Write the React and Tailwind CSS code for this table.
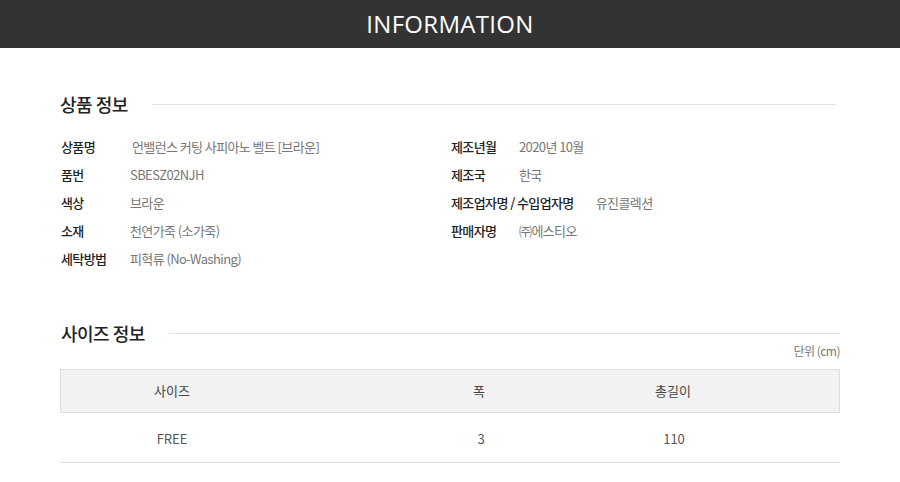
const kr = "font-['Noto_Sans_CJK_KR','Noto_Sans',sans-serif]";

const leftRows = [
  ["상품명", "언밸런스 커팅 사피아노 벨트 [브라운]", "pl-[2px]"],
  ["품번", "SBESZ02NJH", ""],
  ["색상", "브라운", ""],
  ["소재", "천연가죽 (소가죽)", ""],
  ["세탁방법", "피혁류 (No-Washing)", ""],
];

const rightRows = [
  ["제조년월", "2020년 10월"],
  ["제조국", "한국"],
  ["제조업자명 / 수입업자명", "유진콜렉션"],
  ["판매자명", "㈜에스티오"],
];

function SectionTitle({ children, lineClass = "" }) {
  return (
    <div className="flex items-center">
      <h3 className="text-[18px] leading-[22px] font-medium text-[#222] tracking-[-0.5px] shrink-0">
        {children}
      </h3>
      <div className={"flex-1 h-px bg-[#e2e2e2] " + lineClass} />
    </div>
  );
}

function InfoRow({ label, value, labelMin, extra = "" }) {
  return (
    <div className="flex items-center h-[28px] text-[13px] tracking-[-0.6px]">
      <span className={"font-medium text-[#222] " + labelMin}>{label}</span>
      <span className={"text-[#777] " + extra}>{value}</span>
    </div>
  );
}

export default function App() {
  return (
    <div className={"w-[900px] h-[482px] bg-white overflow-hidden " + kr}>
      <div className="h-[48px] bg-[#333333] flex items-center justify-center">
        <span className="font-['Open_Sans',sans-serif] text-[24px] text-white tracking-[0.3px]">
          INFORMATION
        </span>
      </div>

      <div className="w-[780px] mx-auto">
        <div className="mt-[45px] pr-[4px]">
          <SectionTitle lineClass="ml-[24px]">상품 정보</SectionTitle>
        </div>

        <div className="mt-[18px] grid grid-cols-[391px_1fr]">
          <div className="pl-[1px]">
            {leftRows.map(([l, v, e]) => (
              <InfoRow key={l} label={l} value={v} extra={e} labelMin="min-w-[48px] mr-[21px]" />
            ))}
          </div>
          <div>
            {rightRows.map(([l, v]) => (
              <InfoRow key={l} label={l} value={v} labelMin="min-w-[46px] mr-[22px]" />
            ))}
          </div>
        </div>

        <div className="mt-[49px] pl-[1px]">
          <SectionTitle lineClass="ml-[24px]">사이즈 정보</SectionTitle>
        </div>
        <div className="text-right text-[12px] leading-[14px] text-[#777] tracking-[-0.5px]">
          단위 (cm)
        </div>

        <div className="mt-[11px] text-[13px] text-[#444]">
          <div className="flex items-center h-[44px] bg-[#f2f2f2] border border-[#dedede]">
            <span className="ml-[63px] w-24 text-center">사이즈</span>
            <span className="ml-[211px] w-24 text-center">폭</span>
            <span className="ml-[98px] w-24 text-center">총길이</span>
          </div>
          <div className="flex items-center h-[50px] pt-[3px] border-b border-[#dedede] text-[#555]">
            <span className="ml-[64px] w-24 text-center">FREE</span>
            <span className="ml-[213px] w-24 text-center">3</span>
            <span className="ml-[97px] w-24 text-center">110</span>
          </div>
        </div>
      </div>
    </div>
  );
}
